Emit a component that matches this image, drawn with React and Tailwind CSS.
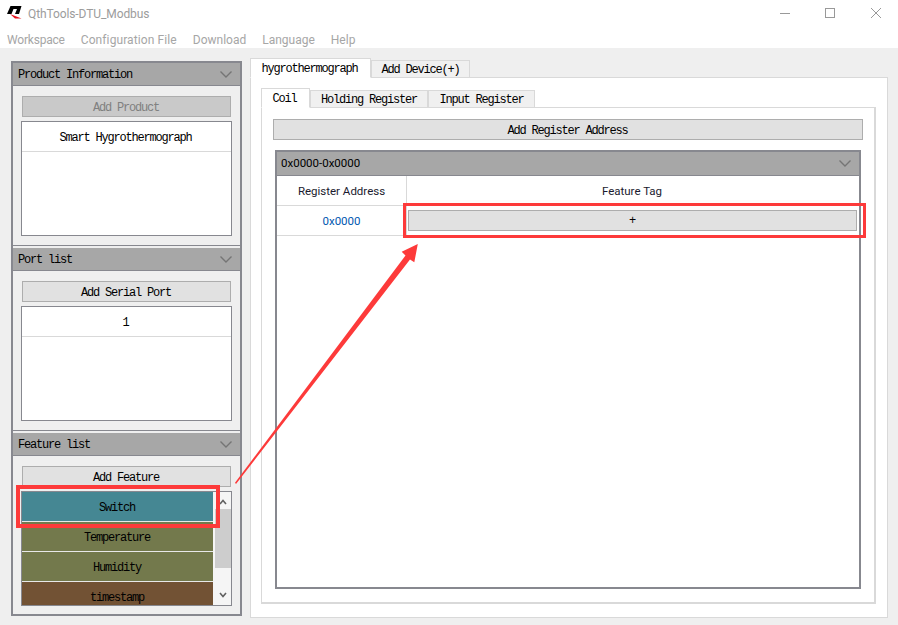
import React from "react";

const MONO = "font-['Liberation_Mono',monospace] text-[12px] tracking-[-1.2px] text-black";

function Chevron() {
  return (
    <svg width="12" height="7" viewBox="0 0 12 7" className="text-[#757575]">
      <path d="M0.5 0.5 L6 6 L11.5 0.5" fill="none" stroke="currentColor" strokeWidth="1.4" />
    </svg>
  );
}

function Btn({ children, disabled, className = "" }) {
  return (
    <div
      className={`flex h-[21px] items-center justify-center border border-[#adadad] pr-[1px] pt-[2px] ${
        disabled ? "bg-[#c9c9c9]" : "bg-[#e1e1e1]"
      } ${className}`}
    >
      <span className={disabled ? "font-['Liberation_Mono',monospace] text-[12px] tracking-[-1.2px] text-[#808080]" : MONO}>{children}</span>
    </div>
  );
}

function Header({ title }) {
  return (
    <div className="flex h-[23px] shrink-0 items-center justify-between border-b border-[#87888f] bg-[#a7a7a7] pl-[5px] pr-[8px]">
      <span className={`${MONO} pt-[2px]`}>{title}</span>
      <Chevron />
    </div>
  );
}

function ListBox({ rows }) {
  return (
    <div className="mt-[4px] h-[115px] border border-[#87888f] bg-white">
      {rows.map((r) => (
        <div key={r} className={`flex h-[30px] items-center justify-center border-b border-[#d9d9d9] pr-[2px] pt-[2px] ${MONO}`}>
          {r}
        </div>
      ))}
    </div>
  );
}

function Section({ title, button, disabled, last, children }) {
  return (
    <div className={`flex flex-col ${last ? "h-[181px]" : "h-[182px]"} shrink-0`}>
      <Header title={title} />
      <div className="flex flex-1 flex-col px-[8px] pt-[10px]">
        <Btn disabled={disabled} className="mx-px">{button}</Btn>
        {children}
      </div>
    </div>
  );
}

function Separator() {
  return <div className="h-[3px] shrink-0 border-t border-[#87888f] bg-[#efefef]" />;
}

function FeatureRow({ label, bg }) {
  return (
    <div className={`flex h-[30px] shrink-0 items-center justify-center border-b border-[#e8e8e8] pr-[1px] pt-[2px] ${bg} ${MONO}`}>
      {label}
    </div>
  );
}

function FeatureList() {
  return (
    <div className="mt-[4px] flex h-[115px] border border-[#87888f] bg-[#f3f3f3]">
      <div className="flex w-[191px] flex-col overflow-hidden">
        <FeatureRow label="Switch" bg="bg-[#458793]" />
        <FeatureRow label="Temperature" bg="bg-[#73794c]" />
        <FeatureRow label="Humidity" bg="bg-[#73794c]" />
        <FeatureRow label="timestamp" bg="bg-[#725234]" />
      </div>
      <div className="flex flex-1 flex-col items-center bg-[#f5f5f5] pl-[2px]">
        <svg width="8" height="6" viewBox="0 0 8 6" className="mt-[7px] text-[#606060]">
          <path d="M1 5 L4 1.5 L7 5" fill="none" stroke="currentColor" strokeWidth="1.6" />
        </svg>
        <div className="mt-[4px] h-[59px] w-full bg-[#cdcdcd]" />
        <svg width="8" height="6" viewBox="0 0 8 6" className="mt-[24px] text-[#606060]">
          <path d="M1 1 L4 4.5 L7 1" fill="none" stroke="currentColor" strokeWidth="1.6" />
        </svg>
      </div>
    </div>
  );
}

function Tab({ label, active, w }) {
  return (
    <div
      className={`flex items-center justify-center border border-[#d9d9d9] ${w} ${MONO} ${
        active
          ? "relative z-10 h-[20px] border-b-white bg-white pr-[2px] pt-[1px]"
          : "h-[18px] bg-[#f0f0f0] pt-[1px]"
      }`}
    >
      {label}
    </div>
  );
}

const UI = "font-['Roboto',sans-serif] text-[12px]";
const CELL = "font-['Roboto',sans-serif] text-[11.5px]";

export default function App() {
  return (
    <div className="relative flex h-[625px] w-[898px] flex-col overflow-hidden bg-[#efefef]">
      {/* title + menu */}
      <div className="h-[48px] shrink-0 bg-white">
        <div className="flex h-[26px] items-center pl-[7px]">
          <svg width="15" height="13" viewBox="0 0 15 13" className="mb-[1px]">
            <path d="M3.5 0 H14.5 L12 8 H8 L10 3 H6.5 L4.5 8 H0 Z" fill="#000" />
            <path d="M3 8 L14.5 12.5 L8 12.5 Z" fill="#e8101c" />
          </svg>
          <span className={`${UI} ml-[6px] pt-[2px] tracking-[-0.1px] text-[#9c9c9c]`}>QthTools-DTU_Modbus</span>
          <div className="ml-auto flex items-center pr-[17px]">
            <svg width="10" height="10" viewBox="0 0 10 10" className="mr-[35px]">
              <path d="M0 5.5 H10" stroke="#999" strokeWidth="1" />
            </svg>
            <svg width="10" height="10" viewBox="0 0 10 10" className="mr-[36px]">
              <rect x="0.5" y="0.5" width="9" height="9" fill="none" stroke="#999" strokeWidth="1" />
            </svg>
            <svg width="10" height="10" viewBox="0 0 10 10">
              <path d="M0 0 L10 10 M10 0 L0 10" stroke="#999" strokeWidth="1" />
            </svg>
          </div>
        </div>
        <div className={`${UI} flex h-[22px] items-center gap-[16px] pl-[7px] pt-[5px] text-[#a6a6a6]`}>
          <span className="tracking-[-0.2px]">Workspace</span>
          <span className="tracking-[0.1px]">Configuration File</span>
          <span>Download</span>
          <span>Language</span>
          <span>Help</span>
        </div>
      </div>

      {/* body */}
      <div className="flex flex-1 pb-[7px] pl-[11px] pr-[10px] pt-[10px]">
        {/* left panel */}
        <div className="mt-[3px] h-[555px] w-[231px] shrink-0 border-2 border-[#87888f] bg-[#efefef]">
          <Section title="Product Information" button="Add Product" disabled>
            <ListBox rows={["Smart Hygrothermograph"]} />
          </Section>
          <Separator />
          <Section title="Port list" button="Add Serial Port">
            <ListBox rows={["1"]} />
          </Section>
          <Separator />
          <Section title="Feature list" button="Add Feature" last>
            <FeatureList />
          </Section>
        </div>

        {/* right area */}
        <div className="ml-[8px] flex min-w-0 flex-1 flex-col">
          <div className="flex h-[20px] shrink-0 items-end">
            <Tab label="hygrothermograph" active w="w-[121px]" />
            <Tab label="Add Device(+)" w="w-[99px]" />
          </div>
          <div className="-mt-px flex flex-1 flex-col border border-[#d9d9d9] bg-white pb-[13px] pl-[10px] pr-[11px] pt-[10px]">
            <div className="flex h-[20px] shrink-0 items-end">
              <Tab label="Coil" active w="w-[49px]" />
              <Tab label="Holding Register" w="w-[118px]" />
              <Tab label="Input Register" w="w-[107px]" />
            </div>
            <div className="-mt-px flex flex-1 flex-col border border-b-2 border-r-2 border-[#d9d9d9] bg-white px-[11px] pb-[13px] pt-[11px]">
              <Btn className="shrink-0">Add Register Address</Btn>
              <div className="mx-[2px] mt-[10px] flex flex-1 flex-col border-2 border-[#87888f] bg-white">
                <div className="flex h-[24px] shrink-0 items-center justify-between border-b border-[#87888f] bg-[#a7a7a7] pl-[4px] pr-[8px]">
                  <span className={`${CELL} pt-[1px] text-black`}>0x0000-0x0000</span>
                  <Chevron />
                </div>
                <div className="grid grid-cols-[130px_1fr] grid-rows-[30px_30px]">
                  <div className={`${CELL} flex items-center justify-center border-b border-r border-[#d9d9d9] pt-[2px] text-[#1a1a2e]`}>Register Address</div>
                  <div className={`${CELL} flex items-center justify-center border-b border-[#d9d9d9] pr-[2px] pt-[2px] text-[#1a1a2e]`}>Feature Tag</div>
                  <div className={`${CELL} flex items-center justify-center border-b border-r border-[#d9d9d9] pt-[2px] text-[#0058b0]`}>0x0000</div>
                  <div className="flex items-center border-b border-[#d9d9d9] pl-px">
                    <div className="flex h-[21px] w-[449px] items-center justify-center border border-[#adadad] bg-[#e1e1e1] pr-[1px]">
                      <span className={MONO}>+</span>
                    </div>
                  </div>
                </div>
              </div>
            </div>
          </div>
        </div>
      </div>

      {/* red annotations */}
      <div className="absolute left-[16px] top-[485px] h-[43px] w-[204px] border-[4px] border-[#fd3a3a]" />
      <div className="absolute left-[403px] top-[203px] h-[35px] w-[463px] border-[3px] border-[#fd3a3a]" />
      <svg className="pointer-events-none absolute left-0 top-0" width="898" height="625" viewBox="0 0 898 625">
        <polygon
          points="235,482.8 405.5,255.5 401.7,251.7 417.8,244 414.3,262.3 410,259.5 236,484"
          fill="#fd3a3a"
        />
      </svg>
    </div>
  );
}
